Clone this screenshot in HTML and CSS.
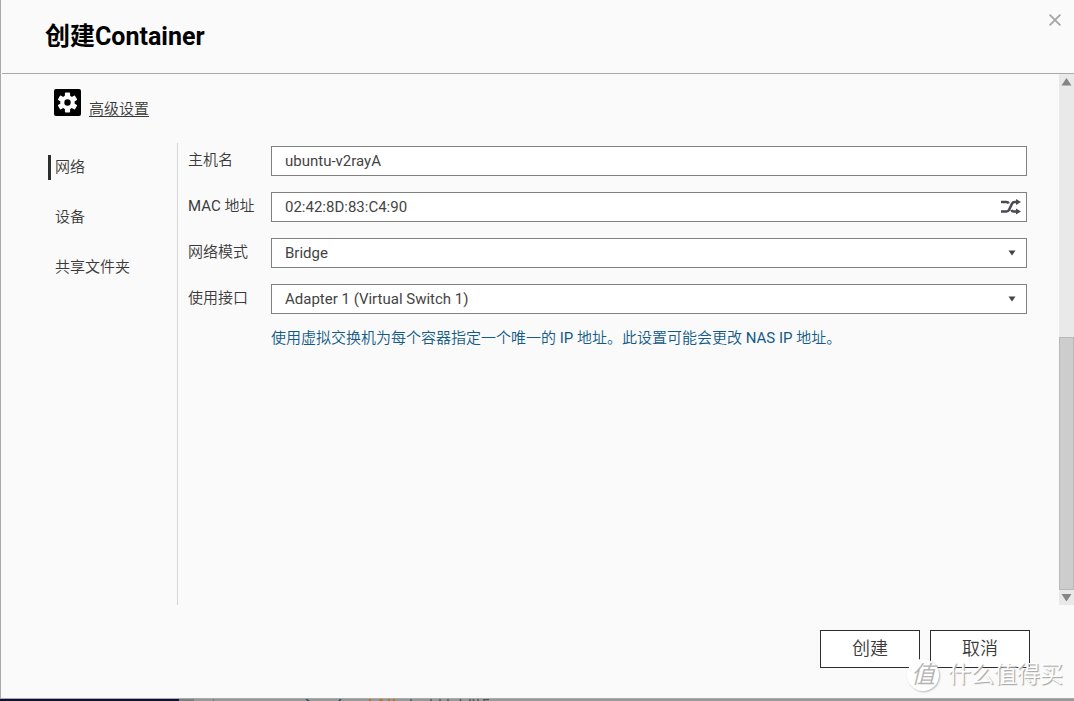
FILE: index.html
```html
<!DOCTYPE html>
<html lang="zh-CN">
<head>
<meta charset="utf-8">
<title>创建Container</title>
<link rel="stylesheet" href="styles.css">
</head>
<body>
<main class="dialog">
  <header class="dialog-header">
    <h1 class="title">创建Container</h1>
    <button class="close" type="button" aria-label="关闭">
      <svg width="12" height="12" viewBox="0 0 12 12"><path d="M.6.6l10.8 10.8M11.4.6L.6 11.4" stroke="#a6a6a6" stroke-width="1.8"/></svg>
    </button>
  </header>
  <div class="body">
    <div class="content">
      <div class="advanced">
        <svg class="gear" width="27" height="27" viewBox="0 0 27 27">
          <rect width="27" height="27" rx="2" fill="#000"/>
          <g fill="#fff">
            <circle cx="13.5" cy="13.5" r="7.2"/>
            <rect x="10.9" y="3.6" width="5.2" height="19.8" rx="1"/>
            <rect x="10.9" y="3.6" width="5.2" height="19.8" rx="1" transform="rotate(60 13.5 13.5)"/>
            <rect x="10.9" y="3.6" width="5.2" height="19.8" rx="1" transform="rotate(120 13.5 13.5)"/>
          </g>
          <circle cx="13.5" cy="13.5" r="3.2" fill="#000"/>
        </svg>
        <a class="advanced-link" href="#advanced">高级设置</a>
      </div>
      <div class="columns" id="advanced">
        <nav class="tabs">
          <a class="tab active" href="#network">网络</a>
          <a class="tab" href="#device">设备</a>
          <a class="tab" href="#folder">共享文件夹</a>
        </nav>
        <form class="form" id="network">
          <div class="row">
            <label for="host">主机名</label>
            <div class="field"><input id="host" type="text" value="ubuntu-v2rayA"></div>
          </div>
          <div class="row">
            <label for="mac">MAC 地址</label>
            <div class="field">
              <input id="mac" type="text" value="02:42:8D:83:C4:90">
              <button class="shuffle" type="button" aria-label="重新生成">
                <svg width="20" height="16" viewBox="0 0 20 16"><path d="M0 3h5.500q1.500 0 2.200 1.500M0 12.500h5.500q1.800 0 2.600-1.700l2.900-6.100q.8-1.700 2.600-1.700H17M10.300 11q.8 1.500 2.200 1.500H17" fill="none" stroke="#4a4a55" stroke-width="2.600"/><path d="M15 0l5 3-5 3zM15 9.500l5 3-5 3z" fill="#4a4a55"/></svg>
              </button>
            </div>
          </div>
          <div class="row">
            <label for="mode">网络模式</label>
            <div class="field">
              <select id="mode"><option>Bridge</option></select>
              <svg class="caret" width="8" height="6" viewBox="0 0 8 6"><path d="M.5.5h7L4 5.500z" fill="#444"/></svg>
            </div>
          </div>
          <div class="row">
            <label for="adapter">使用接口</label>
            <div class="field">
              <select id="adapter"><option>Adapter 1 (Virtual Switch 1)</option></select>
              <svg class="caret" width="8" height="6" viewBox="0 0 8 6"><path d="M.5.5h7L4 5.500z" fill="#444"/></svg>
            </div>
          </div>
          <p class="hint">使用虚拟交换机为每个容器指定一个唯一的 IP 地址。此设置可能会更改 NAS IP 地址。</p>
        </form>
      </div>
    </div>
    <div class="scrollbar">
      <svg width="15" height="15" viewBox="0 0 15 15"><path d="M7.500 4l5 7.500h-10z" fill="#858585"/></svg>
      <div class="track"><div class="thumb"></div></div>
      <svg width="15" height="15" viewBox="0 0 15 15"><path d="M7.500 11.500l5-7.500h-10z" fill="#858585"/></svg>
    </div>
  </div>
  <footer class="actions">
    <button class="button" type="submit" form="network">创建</button>
    <button class="button" type="button">取消</button>
  </footer>
</main>
<div class="backdrop">
  <div class="backdrop-dark"></div>
  <div class="backdrop-mid"></div>
  <div class="backdrop-light">
    <svg width="300" height="2" viewBox="0 0 300 2">
      <path d="M92 0l3 2M127 0l-2 2" stroke="#34475c" stroke-width="1.500"/>
      <path d="M156 0v2M166 2l1-2 1 2M175 0v2M180 0v2" stroke="#b97322" stroke-width="2"/>
      <path d="M197 0v2M217 0v2M226 0v2M234 0v2M247 0l-1 2M256 0v2M259 0l1 2M264 0v2M270 0v2M270 .5h5" stroke="#555" stroke-width="1.500"/>
    </svg>
  </div>
</div>
<div class="watermark"><span class="badge">值</span><span class="brand">什么值得买</span></div>
</body>
</html>
```

FILE: styles.css
```css
* { box-sizing: border-box; }

body {
  margin: 0;
  min-height: 100vh;
  display: flex;
  flex-direction: column;
  position: relative;
  overflow: hidden;
  font: 400 15px/20px Roboto, "Noto Sans CJK SC DemiLight", "Noto Sans CJK SC", sans-serif;
  color: #3a3a3a;
  background: #fafafa;
}

input, select, button { font: inherit; color: inherit; }

.dialog {
  flex: 1;
  display: flex;
  flex-direction: column;
  border-left: 1px solid #aaa;
  background: #fafafa;
}

.dialog-header {
  display: flex;
  justify-content: space-between;
  align-items: flex-start;
  height: 74px;
  margin-left: 1px;
  padding: 14px 13px 0 43px;
  border-bottom: 1px solid #aaa;
}

.title {
  margin: 7px 0 0;
  font-family: Roboto, "Noto Sans CJK SC", sans-serif;
  font-size: 25px;
  line-height: 32px;
  font-weight: 700;
  color: #000;
}

.close, .shuffle {
  display: flex;
  padding: 0;
  border: 0;
  background: none;
}

.body { flex: 1; display: flex; }

.content {
  flex: 1;
  display: flex;
  flex-direction: column;
  padding: 15px 32px 0 47px;
}

.advanced { display: flex; gap: 8px; padding-left: 6px; height: 54px; }

.advanced-link {
  margin-top: 10px;
  color: inherit;
  text-decoration: underline;
  text-underline-offset: 2px;
}

.columns { flex: 1; display: flex; }

.tabs {
  width: 130px;
  display: flex;
  flex-direction: column;
  gap: 25px;
  padding-top: 12px;
  border-right: 1px solid #d5d5d5;
}

.tab {
  padding: 2px 0 3px 4px;
  border-left: 3px solid transparent;
  color: inherit;
  text-decoration: none;
}

.tab.active { border-color: #2d2d2d; }

.form {
  flex: 1;
  display: flex;
  flex-direction: column;
  gap: 16px;
  padding: 3px 0 0 10px;
}

.row { display: flex; align-items: flex-start; }
.row label { width: 83px; padding-top: 4px; }

.field { flex: 1; display: flex; position: relative; }

.field input, .field select {
  width: 100%;
  height: 30px;
  padding: 0 13px;
  border: 1px solid #808080;
  border-radius: 0;
  background: #fff;
  color: #444;
  appearance: none;
}

.shuffle { position: absolute; right: 6px; top: 7px; }
.caret { position: absolute; right: 11px; top: 12px; pointer-events: none; }

.hint { margin: -2px 0 0 83px; color: #135a87; }

.scrollbar {
  width: 15px;
  display: flex;
  flex-direction: column;
  background: #e9e9e9;
}

.scrollbar svg { display: block; }
.track { flex: 1; display: flex; flex-direction: column; justify-content: flex-end; }
.thumb { height: 50.5%; background: #cdcdcd; border: 1px solid #b8b8b8; }

.actions {
  display: flex;
  justify-content: flex-end;
  gap: 10px;
  padding: 25px 44px 30px;
}

.button {
  width: 100px;
  height: 38px;
  padding: 0;
  border: 1px solid #2d2d2d;
  background: #fff;
  font-size: 18px;
}

.backdrop {
  display: flex;
  height: 3px;
  border-top: 1px solid #aaa;
  background: #999;
}

.backdrop-dark { width: 179px; background: #111133; }
.backdrop-mid { width: 15px; background: #7e7e7e; }

.backdrop-light {
  display: flex;
  margin-left: 19px;
  border-left: 1px solid #777;
}

.watermark {
  position: absolute;
  right: 11px;
  bottom: 10px;
  display: flex;
  align-items: center;
  gap: 9px;
  pointer-events: none;
  color: #fff;
  text-shadow: 1px 1px 1px #aaa, 1px 1px 1px #bbb;
}

.badge {
  width: 32px;
  height: 32px;
  border-radius: 50%;
  background: #fff;
  box-shadow: 1px 1px 2px #bbb;
  color: #b4b4b4;
  font-size: 24px;
  line-height: 32px;
  text-align: center;
  text-shadow: none;
  font-style: italic;
}

.brand { font-size: 23px; line-height: 32px; }
```
